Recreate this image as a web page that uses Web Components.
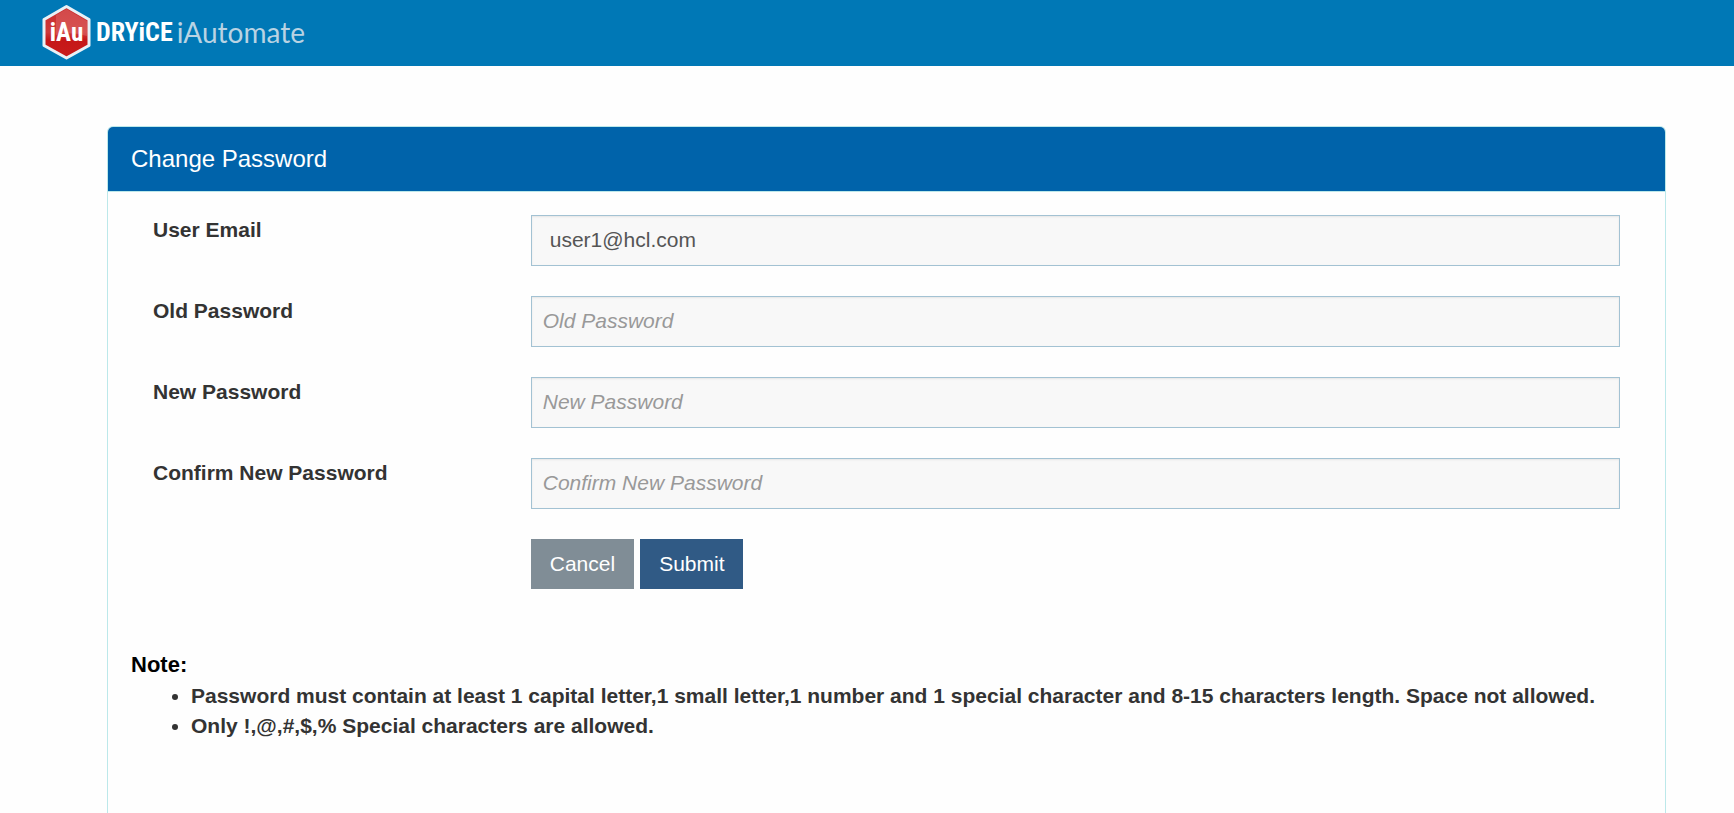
<!DOCTYPE html>
<html lang="en">
<head>
<meta charset="utf-8">
<title>Change Password</title>
<style>
    body {
        margin: 0;
        min-height: 100vh;
        display: flex;
        flex-direction: column;
        background: #fefefe;
        color: #333;
        font: 21px/30px "Liberation Sans", Arial, sans-serif;
    }
    main {
        flex: 1;
        display: flex;
        padding: 60px 68px 0 107px;
    }
</style>
</head>
<body>
<app-header></app-header>
<main>
    <form-panel heading="Change Password">
        <form-field name="email" type="email" label="User Email" value="user1@hcl.com"></form-field>
        <form-field name="old" type="password" label="Old Password" placeholder="Old Password"></form-field>
        <form-field name="new" type="password" label="New Password" placeholder="New Password"></form-field>
        <form-field name="confirm" type="password" label="Confirm New Password" placeholder="Confirm New Password"></form-field>
        <form-actions>
            <action-button>Cancel</action-button>
            <action-button primary>Submit</action-button>
        </form-actions>
        <password-note>
            <li>Password must contain at least 1 capital letter,1 small letter,1 number and 1 special character and 8-15 characters length. Space not allowed.</li>
            <li>Only !,@,#,$,% Special characters are allowed.</li>
        </password-note>
    </form-panel>
</main>

<script>
class AppHeader extends HTMLElement {
    constructor() {
        super();
        const shadow = this.attachShadow({ mode: 'open' });
        shadow.innerHTML = `
            <style>
                :host {
                    display: block;
                    background: #0078b6;
                    padding: 4px 41px 6px;
                }
                header {
                    display: flex;
                    align-items: center;
                    height: 56px;
                    gap: 4px;
                    color: #fff;
                }
                svg { display: block; width: 51px; height: 56px; }
                .brand { font: bold 26px/32px "Roboto Condensed", "Liberation Sans Narrow", sans-serif; }
                .product { font: 28px/32px Lato, "Liberation Sans", sans-serif; color: #b9d3e3; }
            </style>
            <header>
                <svg viewBox="0 0 51 56" role="img" aria-label="iAu">
                    <defs>
                        <linearGradient id="red" x1="0" y1="0" x2="0" y2="1">
                            <stop offset="0" stop-color="#c92a2b"/>
                            <stop offset="0.5" stop-color="#cf3a3a"/>
                            <stop offset="0.65" stop-color="#c51718"/>
                            <stop offset="1" stop-color="#c91c1c"/>
                        </linearGradient>
                    </defs>
                    <path d="M25.500 2.500L48 15.500V41.500L25.500 54L3 41.500V15.500Z" fill="url(#red)" stroke="#e9f1f6" stroke-width="3" stroke-linejoin="round"/>
                    <path d="M15 11L25.500 5L46 17V32Q30 27 15 31Z" fill="#e58080" opacity="0.35"/>
                    <text x="25.500" y="37" text-anchor="middle" fill="#fff" font-family="Roboto Condensed, Liberation Sans Narrow, sans-serif" font-weight="bold" font-size="25">iAu</text>
                </svg>
                <span class="brand">DRYiCE</span>
                <span class="product">iAutomate</span>
            </header>
        `;
    }
}

class FormPanel extends HTMLElement {
    constructor() {
        super();
        const shadow = this.attachShadow({ mode: 'open' });
        shadow.innerHTML = `
            <style>
                :host {
                    flex: 1;
                    display: block;
                    border: 1px solid #bce8ea;
                    border-bottom: 0;
                    border-radius: 6px 6px 0 0;
                }
                h1 {
                    margin: 0;
                    padding: 17px 23px;
                    border-bottom: 1px solid #bce8ea;
                    border-radius: 5px 5px 0 0;
                    background: #0063aa;
                    color: #fff;
                    font-size: 24px;
                    font-weight: normal;
                }
                .body { padding: 23px; }
            </style>
            <h1></h1>
            <div class="body"><slot></slot></div>
        `;
        shadow.querySelector('h1').textContent = this.getAttribute('heading');
    }
}

class FormField extends HTMLElement {
    constructor() {
        super();
        const shadow = this.attachShadow({ mode: 'open' });
        shadow.innerHTML = `
            <style>
                :host {
                    display: grid;
                    grid-template-columns: 1fr 3fr;
                    margin-bottom: 30px;
                }
                label { padding: 0 22px; font-weight: bold; }
                .control { padding: 0 22px; }
                input {
                    display: block;
                    box-sizing: border-box;
                    width: 100%;
                    height: 51px;
                    padding: 0 18px 2px;
                    border: 1px solid #a3c2d3;
                    border-radius: 0;
                    outline: none;
                    background: #f8f8f8;
                    box-shadow: inset 0 1px 2px rgba(0, 0, 0, .075);
                    color: #555;
                    font: inherit;
                }
                input[type="password"] { padding: 0 11px 2px; }
                input::placeholder { color: #999; font-style: italic; }
            </style>
            <label for="field"></label>
            <div class="control"><input id="field"></div>
        `;
        shadow.querySelector('label').textContent = this.getAttribute('label');

        // Pass the plain input attributes through
        const input = shadow.querySelector('input');
        ['type', 'name', 'value', 'placeholder'].forEach(attr => {
            if (this.hasAttribute(attr)) input.setAttribute(attr, this.getAttribute(attr));
        });
    }
}

class FormActions extends HTMLElement {
    constructor() {
        super();
        const shadow = this.attachShadow({ mode: 'open' });
        shadow.innerHTML = `
            <style>
                :host { display: grid; grid-template-columns: 1fr 3fr; }
                div { grid-column: 2; display: flex; gap: 6px; padding: 0 22px; }
            </style>
            <div><slot></slot></div>
        `;
    }
}

class ActionButton extends HTMLElement {
    constructor() {
        super();
        const shadow = this.attachShadow({ mode: 'open' });
        shadow.innerHTML = `
            <style>
                :host { display: block; }
                button {
                    display: block;
                    padding: 10px 19px;
                    border: none;
                    background: #808d96;
                    color: #fff;
                    font: inherit;
                    cursor: pointer;
                }
                :host([primary]) button { background: #305a85; }
            </style>
            <button type="button"><slot></slot></button>
        `;
    }
}

class PasswordNote extends HTMLElement {
    constructor() {
        super();
        const shadow = this.attachShadow({ mode: 'open' });
        shadow.innerHTML = `
            <style>
                :host { display: block; margin-top: 60px; font-weight: bold; }
                h2 { margin: 0; color: #000; font-size: 22px; line-height: 32px; }
                ul { margin: 0; padding-left: 60px; }
            </style>
            <h2>Note:</h2>
            <ul><slot></slot></ul>
        `;
    }
}

customElements.define('app-header', AppHeader);
customElements.define('form-panel', FormPanel);
customElements.define('form-field', FormField);
customElements.define('form-actions', FormActions);
customElements.define('action-button', ActionButton);
customElements.define('password-note', PasswordNote);
</script>
</body>
</html>
